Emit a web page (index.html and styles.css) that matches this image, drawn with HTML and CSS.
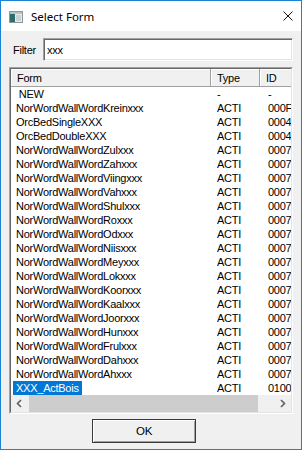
FILE: index.html
```html
<!DOCTYPE html>
<html>
<head>
<meta charset="utf-8">
<link rel="stylesheet" href="styles.css">
</head>
<body>
<div class="window">
  <div class="titlebar">
    <svg class="app-icon" width="14" height="12" viewBox="0 0 14 12">
      <rect x="0.5" y="0.5" width="13" height="11" fill="#e6eaea" stroke="#8a9a9a"/>
      <rect x="1" y="1" width="12" height="2" fill="#b9c5c5"/>
      <rect x="1" y="3" width="5" height="8" fill="#2f6d6d"/>
      <rect x="7" y="4" width="5" height="6" fill="#c8d2d2"/>
    </svg>
    <span class="title">Select Form</span>
    <svg class="close" width="10" height="10" viewBox="0 0 10 10">
      <path d="M0.5 0.5 L9.5 9.5 M9.5 0.5 L0.5 9.5" stroke="#111" stroke-width="1" fill="none"/>
    </svg>
  </div>
  <div class="client">
    <div class="filter-row">
      <span class="filter-label">Filter</span>
      <div class="input"><span class="input-text">xxx</span></div>
    </div>
    <div class="list">
      <div class="list-inner">
        <div class="header">
          <div class="hcell hc-form">Form</div>
          <div class="hcell hc-type">Type</div>
          <div class="hcell hc-id">ID</div>
        </div>
        <div class="rows">
          <div class="row"><span class="c-form"><span class="lbl"> NEW</span></span><span class="c-type">-</span><span class="c-id">-</span></div>
          <div class="row"><span class="c-form"><span class="lbl">NorWordWallWordKreinxxx</span></span><span class="c-type">ACTI</span><span class="c-id">000F</span></div>
          <div class="row"><span class="c-form"><span class="lbl">OrcBedSingleXXX</span></span><span class="c-type">ACTI</span><span class="c-id">0004</span></div>
          <div class="row"><span class="c-form"><span class="lbl">OrcBedDoubleXXX</span></span><span class="c-type">ACTI</span><span class="c-id">0004</span></div>
          <div class="row"><span class="c-form"><span class="lbl">NorWordWallWordZulxxx</span></span><span class="c-type">ACTI</span><span class="c-id">0007</span></div>
          <div class="row"><span class="c-form"><span class="lbl">NorWordWallWordZahxxx</span></span><span class="c-type">ACTI</span><span class="c-id">0007</span></div>
          <div class="row"><span class="c-form"><span class="lbl">NorWordWallWordViingxxx</span></span><span class="c-type">ACTI</span><span class="c-id">0007</span></div>
          <div class="row"><span class="c-form"><span class="lbl">NorWordWallWordVahxxx</span></span><span class="c-type">ACTI</span><span class="c-id">0007</span></div>
          <div class="row"><span class="c-form"><span class="lbl">NorWordWallWordShulxxx</span></span><span class="c-type">ACTI</span><span class="c-id">0007</span></div>
          <div class="row"><span class="c-form"><span class="lbl">NorWordWallWordRoxxx</span></span><span class="c-type">ACTI</span><span class="c-id">0007</span></div>
          <div class="row"><span class="c-form"><span class="lbl">NorWordWallWordOdxxx</span></span><span class="c-type">ACTI</span><span class="c-id">0007</span></div>
          <div class="row"><span class="c-form"><span class="lbl">NorWordWallWordNiisxxx</span></span><span class="c-type">ACTI</span><span class="c-id">0007</span></div>
          <div class="row"><span class="c-form"><span class="lbl">NorWordWallWordMeyxxx</span></span><span class="c-type">ACTI</span><span class="c-id">0007</span></div>
          <div class="row"><span class="c-form"><span class="lbl">NorWordWallWordLokxxx</span></span><span class="c-type">ACTI</span><span class="c-id">0007</span></div>
          <div class="row"><span class="c-form"><span class="lbl">NorWordWallWordKoorxxx</span></span><span class="c-type">ACTI</span><span class="c-id">0007</span></div>
          <div class="row"><span class="c-form"><span class="lbl">NorWordWallWordKaalxxx</span></span><span class="c-type">ACTI</span><span class="c-id">0007</span></div>
          <div class="row"><span class="c-form"><span class="lbl">NorWordWallWordJoorxxx</span></span><span class="c-type">ACTI</span><span class="c-id">0007</span></div>
          <div class="row"><span class="c-form"><span class="lbl">NorWordWallWordHunxxx</span></span><span class="c-type">ACTI</span><span class="c-id">0007</span></div>
          <div class="row"><span class="c-form"><span class="lbl">NorWordWallWordFrulxxx</span></span><span class="c-type">ACTI</span><span class="c-id">0007</span></div>
          <div class="row"><span class="c-form"><span class="lbl">NorWordWallWordDahxxx</span></span><span class="c-type">ACTI</span><span class="c-id">0007</span></div>
          <div class="row"><span class="c-form"><span class="lbl">NorWordWallWordAhxxx</span></span><span class="c-type">ACTI</span><span class="c-id">0007</span></div>
          <div class="row"><span class="c-form"><span class="lbl selected">XXX_ActBois</span></span><span class="c-type">ACTI</span><span class="c-id">0100</span></div>
        </div>
        <div class="hscroll">
          <div class="sb-btn">
            <svg width="17" height="17" viewBox="0 0 17 17"><path d="M10 5 L6.5 8.5 L10 12" stroke="#606060" stroke-width="1.6" fill="none"/></svg>
          </div>
          <div class="sb-thumb"></div>
          <div class="sb-track"></div>
          <div class="sb-btn">
            <svg width="17" height="17" viewBox="0 0 17 17"><path d="M7 5 L10.5 8.5 L7 12" stroke="#606060" stroke-width="1.6" fill="none"/></svg>
          </div>
        </div>
      </div>
    </div>
    <div class="btn-row">
      <div class="btn">OK</div>
    </div>
  </div>
</div>
</body>
</html>
```

FILE: styles.css
```css
html, body {
  margin: 0;
  padding: 0;
  background: #f0f0f0;
}

.window {
  width: 302px;
  height: 450px;
  box-sizing: border-box;
  border: 1px solid #1883d7;
  display: flex;
  flex-direction: column;
  background: #f0f0f0;
  font-family: "Liberation Sans", Arial, sans-serif;
  font-size: 11px;
  letter-spacing: -0.25px;
  color: #000;
}

.titlebar {
  height: 30px;
  flex: none;
  background: #fff;
  display: flex;
  align-items: center;
  padding-left: 8px;
}

.app-icon {
  display: block;
  margin-top: 1px;
}

.title {
  margin-left: 8px;
  font-family: "Noto Sans", "Liberation Sans", sans-serif;
  font-size: 11.5px;
  letter-spacing: 0;
  color: #000;
  padding-top: 1px;
}

.close {
  display: block;
  margin-left: auto;
  margin-right: 8px;
}

.client {
  flex: 1;
  display: flex;
  flex-direction: column;
  padding: 7px 8px 0 8px;
}

.filter-row {
  display: flex;
  align-items: center;
  height: 23px;
}

.filter-label {
  padding-left: 4px;
}

.input {
  margin-left: auto;
  width: 250px;
  height: 23px;
  box-sizing: border-box;
  background: #fff;
  border: 1px solid;
  border-color: #a0a0a0 #fff #fff #a0a0a0;
  box-shadow: inset 1px 1px 0 #696969, inset -1px -1px 0 #e3e3e3;
  display: flex;
  align-items: center;
  padding-left: 3px;
}

.list {
  margin-top: 6px;
  height: 347px;
  box-sizing: border-box;
  border: 1px solid;
  border-color: #a0a0a0 #fff #fff #a0a0a0;
  background: #fff;
}

.list-inner {
  height: 100%;
  box-sizing: border-box;
  border: 1px solid;
  border-color: #696969 #e3e3e3 #e3e3e3 #696969;
  display: flex;
  flex-direction: column;
  overflow: hidden;
}

.header {
  height: 18px;
  flex: none;
  display: flex;
  background: #f0f0f0;
  box-sizing: border-box;
  border-bottom: 1px solid #a0a0a0;
  white-space: nowrap;
}

.hcell {
  flex: none;
  box-sizing: border-box;
  display: flex;
  align-items: center;
  border-right: 1px solid #a0a0a0;
  box-shadow: inset 1px 1px 0 #fff;
  padding-top: 1px;
}

.hc-form {
  width: 200px;
  padding-left: 6px;
}

.hc-type {
  width: 49px;
  padding-left: 6px;
}

.hc-id {
  width: 60px;
  padding-left: 6px;
}

.rows {
  height: 308px;
  flex: none;
  display: flex;
  flex-direction: column;
  background: #fff;
}

.row {
  height: 14px;
  line-height: 14px;
  display: flex;
  white-space: pre;
}

.c-form {
  width: 200px;
  flex: none;
  padding-left: 2px;
  box-sizing: border-box;
}

.lbl {
  display: inline-block;
  padding: 0 3px;
}

.lbl.selected {
  background: #0078d7;
  color: #fff;
}

.c-type {
  width: 49px;
  flex: none;
  box-sizing: border-box;
  padding-left: 6px;
}

.c-id {
  width: 60px;
  flex: none;
  box-sizing: border-box;
  padding-left: 8px;
}

.hscroll {
  height: 17px;
  flex: none;
  display: flex;
  background: #f0f0f0;
}

.sb-btn {
  width: 17px;
  height: 17px;
  flex: none;
}

.sb-btn svg {
  display: block;
}

.sb-thumb {
  width: 229px;
  flex: none;
  margin-left: 1px;
  background: #cdcdcd;
}

.sb-track {
  flex: 1;
}

.btn-row {
  display: flex;
  margin-top: 5px;
}

.btn {
  margin-left: 83px;
  width: 104px;
  height: 24px;
  box-sizing: border-box;
  border: 1px solid #3a3a3a;
  box-shadow: inset 1px 1px 0 #fff, inset -1px -1px 0 #a0a0a0;
  background: #f0f0f0;
  display: flex;
  align-items: center;
  justify-content: center;
  font-size: 11.5px;
}
```
